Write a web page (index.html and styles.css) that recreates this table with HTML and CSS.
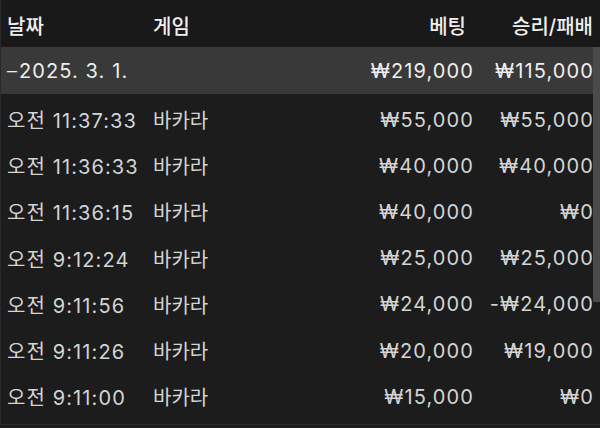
FILE: index.html
```html
<!DOCTYPE html>
<html lang="ko">
<head>
<meta charset="utf-8">
<link rel="stylesheet" href="styles.css">
</head>
<body>
<div class="panel">
  <div class="row header">
    <div class="c-date">날짜</div>
    <div class="c-game">게임</div>
    <div class="c-bet bet-h">베팅</div>
    <div class="c-win">승리/패배</div>
  </div>
  <div class="row group">
    <div class="c-date"><span class="minus">–</span>2025. 3. 1.</div>
    <div class="c-game"></div>
    <div class="c-bet">₩219,000</div>
    <div class="c-win">₩115,000</div>
  </div>
  <div class="row item">
    <div class="c-date">오전 11:37:33</div>
    <div class="c-game">바카라</div>
    <div class="c-bet">₩55,000</div>
    <div class="c-win">₩55,000</div>
  </div>
  <div class="row item">
    <div class="c-date">오전 11:36:33</div>
    <div class="c-game">바카라</div>
    <div class="c-bet">₩40,000</div>
    <div class="c-win">₩40,000</div>
  </div>
  <div class="row item">
    <div class="c-date">오전 11:36:15</div>
    <div class="c-game">바카라</div>
    <div class="c-bet">₩40,000</div>
    <div class="c-win">₩0</div>
  </div>
  <div class="row item">
    <div class="c-date">오전 9:12:24</div>
    <div class="c-game">바카라</div>
    <div class="c-bet">₩25,000</div>
    <div class="c-win">₩25,000</div>
  </div>
  <div class="row item">
    <div class="c-date">오전 9:11:56</div>
    <div class="c-game">바카라</div>
    <div class="c-bet">₩24,000</div>
    <div class="c-win">-₩24,000</div>
  </div>
  <div class="row item">
    <div class="c-date">오전 9:11:26</div>
    <div class="c-game">바카라</div>
    <div class="c-bet">₩20,000</div>
    <div class="c-win">₩19,000</div>
  </div>
  <div class="row item">
    <div class="c-date">오전 9:11:00</div>
    <div class="c-game">바카라</div>
    <div class="c-bet">₩15,000</div>
    <div class="c-win">₩0</div>
  </div>
  <div class="scroll-thumb"></div>
</div>
</body>
</html>
```
FILE: styles.css
```css
html, body {
  margin: 0;
  padding: 0;
  background: #1c1c1c;
}
body {
  width: 600px;
  height: 428px;
  overflow: hidden;
  font-family: "Inter", "Noto Sans CJK KR", sans-serif;
  font-size: 20px;
  color: #d4d4d4;
}
.panel {
  position: relative;
  height: 424px;
  border-left: 1px solid #2a2a2a;
  border-bottom: 1px solid #2a2a2a;
  overflow: hidden;
}
.row {
  display: grid;
  grid-template-columns: 146px 170px 150px 120px;
  padding-left: 6px;
  align-items: center;
  white-space: nowrap;
}
.header {
  height: 47px;
  padding-top: 4px;
  box-sizing: border-box;
  background: #191919;
  color: #efefef;
  font-weight: 500;
}
.group {
  height: 47px;
  padding-top: 1px;
  box-sizing: border-box;
  background: #393939;
  color: #eeeeee;
}
.item {
  height: 46.2px;
  padding-top: 5px;
  box-sizing: border-box;
}
.group .c-date,
.item .c-date,
.group .c-bet,
.item .c-bet,
.group .c-win,
.item .c-win {
  letter-spacing: 1.1px;
}
.c-bet, .c-win {
  text-align: right;
}
.group .c-bet,
.item .c-bet,
.group .c-win,
.item .c-win {
  margin-right: -1px;
}
.bet-h {
  padding-right: 7px;
}
.minus {
  font-weight: 300;
  letter-spacing: 2px;
}
.scroll-thumb {
  position: absolute;
  right: 0;
  top: 47px;
  width: 7px;
  height: 255px;
  background: #4a4a4a;
}
```
